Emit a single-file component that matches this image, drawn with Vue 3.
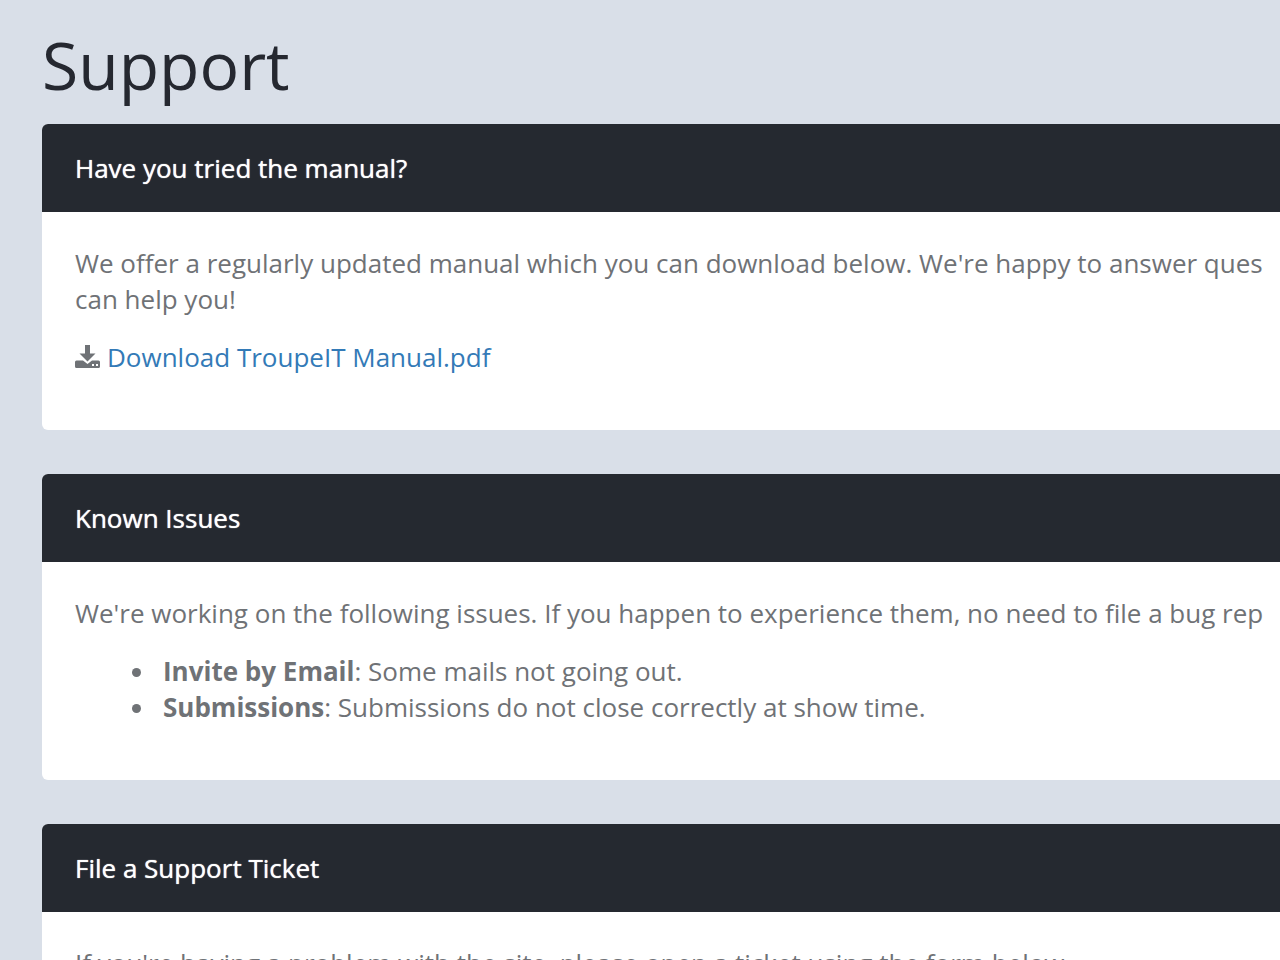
<script setup>
const issues = [
  { title: 'Invite by Email', text: 'Some mails not going out.' },
  { title: 'Submissions', text: 'Submissions do not close correctly at show time.' },
]
</script>

<template>
  <main class="page">
    <h1>Support</h1>

    <section class="panel">
      <h2>Have you tried the manual?</h2>
      <div class="body">
        <p>
          We offer a regularly updated manual which you can download below. We're happy to answer ques<br />
          can help you!
        </p>
        <p>
          <svg class="icon" viewBox="0 0 26 24" aria-hidden="true">
            <path
              fill-rule="evenodd"
              d="M10 0h5v8.500h5.500l-8 8-8-8H10zM1.500 15.500H8l4.500 3.500 4.500-3.500h6.500A1.500 1.500 0 0 1 25 17v4.500a1.500 1.500 0 0 1-1.500 1.500h-22A1.500 1.500 0 0 1 0 21.500V17a1.500 1.500 0 0 1 1.500-1.500zM17 19v2h2v-2zM21 19v2h2v-2z"
            />
          </svg>
          <a href="#manual">Download TroupeIT Manual.pdf</a>
        </p>
      </div>
    </section>

    <section class="panel">
      <h2>Known Issues</h2>
      <div class="body">
        <p>We're working on the following issues. If you happen to experience them, no need to file a bug rep</p>
        <ul>
          <li v-for="issue in issues" :key="issue.title">
            <strong>{{ issue.title }}</strong>: {{ issue.text }}
          </li>
        </ul>
      </div>
    </section>

    <section class="panel">
      <h2>File a Support Ticket</h2>
      <div class="body">
        <p>If you're having a problem with the site, please open a ticket using the form below.</p>
      </div>
    </section>
  </main>
</template>

<style>
html,
body {
  background: #d9dfe8;
  overflow: hidden;
}
</style>

<style scoped>
.page {
  box-sizing: border-box;
  height: 100vh;
  overflow: hidden;
  padding: 18px 0 0 42px;
  color: #6f7276;
  font: 26px/36px "Open Sans", "Noto Sans", sans-serif;
  white-space: nowrap;
}
h1 {
  margin: 0 0 14px;
  color: #252830;
  font-size: 66px;
  line-height: 92px;
  font-weight: 400;
}
.panel {
  margin-bottom: 44px;
  overflow: hidden;
  background: #fff;
  border-radius: 6px 0 0 6px;
}
h2 {
  margin: 0;
  padding: 26px 33px;
  background: #252930;
  color: #fff;
  font-size: 26px;
  line-height: 36px;
  font-weight: 400;
  text-shadow: 0 0 1px #fff;
}
.body {
  padding: 33px 0 33px 33px;
}
p {
  margin: 0 0 22px;
}
a {
  color: #337ab7;
  text-decoration: none;
}
.icon {
  width: 26px;
  height: 24px;
  margin-right: 6px;
  vertical-align: -2px;
  fill: #6f7276;
}
ul {
  margin: 0 0 22px;
  padding-left: 82px;
}
li {
  padding-left: 6px;
}
</style>
